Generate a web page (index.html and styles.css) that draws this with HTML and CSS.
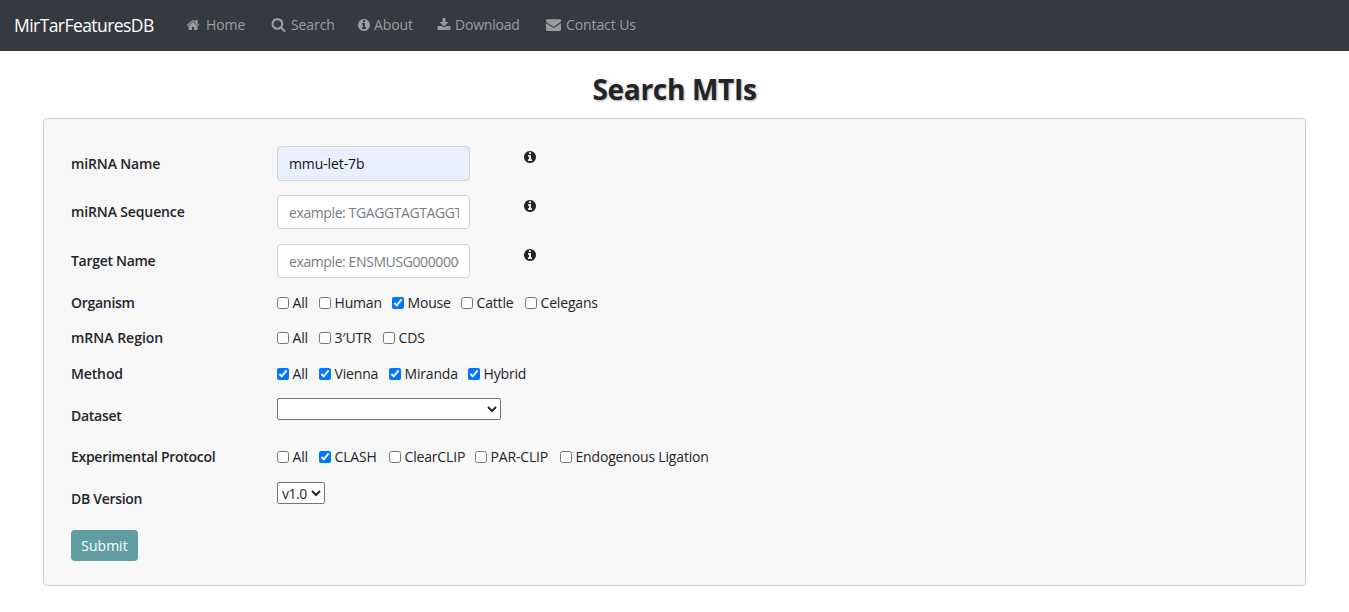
FILE: index.html
```html
<!DOCTYPE html>
<html lang="en">
<head>
<meta charset="utf-8">
<title>MirTarFeaturesDB</title>
<link rel="stylesheet" href="styles.css">
</head>
<body>
<svg class="defs" width="0" height="0">
<symbol id="home" viewBox="0 0 1792 1792"><path d="M1472 992v480q0 26-19 45t-45 19h-384v-384h-256v384h-384q-26 0-45-19t-19-45v-480q0-1 .5-3t.5-3l575-474 575 474q1 2 1 6zm223-69l-62 74q-8 9-21 11h-3q-13 0-21-7l-692-577-692 577q-12 8-24 7-13-2-21-11l-62-74q-8-10-7-23.5t11-21.5l719-599q32-26 76-26t76 26l244 204v-195q0-14 9-23t23-9h192q14 0 23 9t9 23v408l219 182q10 8 11 21.5t-7 23.5z"/></symbol>
<symbol id="search" viewBox="0 0 1792 1792"><path d="M1216 832q0-185-131.5-316.5t-316.5-131.5-316.5 131.5-131.5 316.5 131.5 316.5 316.5 131.5 316.5-131.5 131.5-316.5zm512 832q0 52-38 90t-90 38q-54 0-90-38l-343-342q-179 124-399 124-143 0-273.5-55.5t-225-150-150-225-55.5-273.5 55.5-273.5 150-225 225-150 273.5-55.5 273.5 55.5 225 150 150 225 55.5 273.5q0 220-124 399l343 343q37 37 37 90z"/></symbol>
<symbol id="info" viewBox="0 0 1792 1792"><path d="M1152 1376v-160q0-14-9-23t-23-9h-96v-512q0-14-9-23t-23-9h-320q-14 0-23 9t-9 23v160q0 14 9 23t23 9h96v320h-96q-14 0-23 9t-9 23v160q0 14 9 23t23 9h448q14 0 23-9t9-23zm-128-896v-160q0-14-9-23t-23-9h-192q-14 0-23 9t-9 23v160q0 14 9 23t23 9h192q14 0 23-9t9-23zm640 416q0 209-103 385.5t-279.5 279.5-385.5 103-385.5-103-279.5-279.5-103-385.5 103-385.5 279.5-279.5 385.5-103 385.5 103 279.5 279.5 103 385.5z"/></symbol>
<symbol id="download" viewBox="0 0 1792 1792"><path d="M1344 1344q0-26-19-45t-45-19-45 19-19 45 19 45 45 19 45-19 19-45zm256 0q0-26-19-45t-45-19-45 19-19 45 19 45 45 19 45-19 19-45zm128-224v320q0 40-28 68t-68 28h-1472q-40 0-68-28t-28-68v-320q0-40 28-68t68-28h465l135 136q58 56 136 56t136-56l136-136h464q40 0 68 28t28 68zm-325-569q17 41-14 70l-448 448q-18 19-45 19t-45-19l-448-448q-31-29-14-70 17-39 59-39h256v-448q0-26 19-45t45-19h256q26 0 45 19t19 45v448h256q42 0 59 39z"/></symbol>
<symbol id="envelope" viewBox="0 0 1792 1792"><path d="M1792 710v794q0 66-47 113t-113 47h-1472q-66 0-113-47t-47-113v-794q44 49 101 87 362 246 497 345 57 42 92.5 65.5t94.5 48 110 24.5h2q51 0 110-24.5t94.5-48 92.5-65.5q170-123 498-345 57-39 100-87zm0-294q0 79-49 151t-122 123q-376 261-468 325-10 7-42.5 31t-54 38.5-52 32.5-57.5 27-50 9h-2q-23 0-50-9t-57.5-27-52-32.5-54-38.5-42.5-31q-91-64-262-182.5t-205-142.5q-62-42-117-115.5t-55-136.5q0-78 41.5-130t118.5-52h1472q65 0 112.5 47t47.5 113z"/></symbol>
</svg>
<nav class="navbar">
  <a class="brand">MirTarFeaturesDB</a>
  <a class="link home"><svg class="icon"><use href="#home"/></svg><span>Home</span></a>
  <a class="link search"><svg class="icon"><use href="#search"/></svg><span>Search</span></a>
  <a class="link about"><svg class="icon"><use href="#info"/></svg><span>About</span></a>
  <a class="link download"><svg class="icon"><use href="#download"/></svg><span>Download</span></a>
  <a class="link contact"><svg class="icon"><use href="#envelope"/></svg><span>Contact Us</span></a>
</nav>
<h1 class="title">Search MTIs</h1>
<form class="card">
  <label class="name wide">miRNA Name</label>
  <div class="field"><input class="text filled" type="text" value="mmu-let-7b"><svg class="icon hint"><use href="#info"/></svg></div>
  <label class="name wide raised">miRNA Sequence</label>
  <div class="field"><input class="text" type="text" placeholder="example: TGAGGTAGTAGGTTGTATAGTT"><svg class="icon hint"><use href="#info"/></svg></div>
  <label class="name raised">Target Name</label>
  <div class="field"><input class="text" type="text" placeholder="example: ENSMUSG00000000001"><svg class="icon hint"><use href="#info"/></svg></div>
  <label class="name">Organism</label>
  <div class="checks">
    <label class="w42"><input type="checkbox">All</label><label class="w73"><input type="checkbox">Human</label><label class="w69"><input type="checkbox" checked>Mouse</label><label class="w64"><input type="checkbox">Cattle</label><label><input type="checkbox">Celegans</label>
  </div>
  <label class="name even">mRNA Region</label>
  <div class="checks">
    <label class="w42"><input type="checkbox">All</label><label class="w64"><input type="checkbox">3′UTR</label><label><input type="checkbox">CDS</label>
  </div>
  <label class="name wide">Method</label>
  <div class="checks">
    <label class="w42"><input type="checkbox" checked>All</label><label class="w70"><input type="checkbox" checked>Vienna</label><label class="w79"><input type="checkbox" checked>Miranda</label><label><input type="checkbox" checked>Hybrid</label>
  </div>
  <label class="name low">Dataset</label>
  <div class="field"><select class="dataset"><option></option></select></div>
  <label class="name">Experimental Protocol</label>
  <div class="checks">
    <label class="w42"><input type="checkbox">All</label><label class="w70"><input type="checkbox" checked>CLASH</label><label class="w86"><input type="checkbox">ClearCLIP</label><label class="w85"><input type="checkbox">PAR-CLIP</label><label><input type="checkbox">Endogenous Ligation</label>
  </div>
  <label class="name low raised">DB Version</label>
  <div class="field"><select class="version"><option>v1.0</option></select></div>
  <button class="submit" type="button">Submit</button>
</form>
</body>
</html>
```

FILE: styles.css
```css
* { box-sizing: border-box; }
body { margin: 0; height: 612px; overflow: hidden; background: #fff; color: #212529; font: 14px/20px "Open Sans", "Noto Sans", sans-serif; }
.defs { display: block; }
.navbar { display: flex; align-items: center; height: 51px; padding: 0 0 2px 14px; background: #343a40; }
.brand { width: 172px; color: #fff; font-size: 17.5px; line-height: 24px; letter-spacing: -0.56px; white-space: nowrap; }
.link { display: flex; align-items: center; color: #9a9da0; letter-spacing: -0.1px; white-space: nowrap; }
.icon { width: 14px; height: 14px; flex: none; fill: currentColor; }
.link .icon { margin-right: 6px; }
.home { width: 85px; }
.search { width: 86px; }
.search .icon { width: 15px; height: 15px; margin-right: 5px; }
.about { width: 80px; }
.about .icon { margin-right: 3px; }
.download { width: 109px; letter-spacing: -0.2px; }
.download .icon { margin-right: 4px; }
.contact .icon { width: 15px; height: 15px; margin-right: 5px; }
.title { margin: 21px 0 11px; text-align: center; font-size: 28px; line-height: 35px; font-weight: 700; letter-spacing: -0.3px; text-shadow: 1px 1px 2px #aaa; }
.card { display: grid; grid-template-columns: 206px 1fr; grid-template-rows: 49px 49px 49px 35px 36px 34px 49px 35px 48px 31px; width: 1263px; height: 468px; margin-left: 43px; padding: 27px; border: 1px solid #cfcfcf; border-radius: 4px; background: #f7f7f7; }
.name { padding-top: 8px; font-weight: 600; letter-spacing: -0.29px; white-space: nowrap; }
.name.wide { letter-spacing: -0.13px; }
.name.even { letter-spacing: 0; }
.name:nth-of-type(n+4) { padding-top: 0; }
.name.low:nth-of-type(n) { padding-top: 8px; }
.name.raised:nth-of-type(n) { padding-top: 7px; }
.field { display: flex; align-items: flex-start; }
.text { width: 193px; height: 34px; padding: 5px 10px 5px 11px; border: 1px solid #ced4da; border-radius: 4px; background: #fff; color: #111; font: inherit; }
.text::placeholder { color: #777d82; letter-spacing: -0.4px; opacity: 1; }
.text.filled { height: 35px; background: #e8f0fe; letter-spacing: -0.1px; }
.hint { margin: 4px 0 0 52.5px; }
.checks { display: flex; align-items: flex-start; }
.checks label { display: flex; align-items: center; height: 20px; letter-spacing: -0.17px; white-space: nowrap; }
.checks input { flex: none; width: 12px; height: 12px; margin: -1px 4px 0 -0.5px; }
.w42 { width: 42px; }
.w64 { width: 64px; }
.w69 { width: 69px; }
.w70 { width: 70px; }
.w73 { width: 73px; }
.w79 { width: 79px; }
.w85 { width: 85px; }
.w86 { width: 86px; }
.dataset, .version { height: 22px; padding: 0; border: 1px solid #767676; border-radius: 2px; background: #fff; color: #212529; font: inherit; letter-spacing: -0.45px; }
.dataset { width: 224px; }
.version { width: 48px; }
.submit { width: 67px; height: 31px; padding: 1px 0 0; border: 0; border-radius: 4px; background: #5f9ea0; color: #fff; font: inherit; }
```
